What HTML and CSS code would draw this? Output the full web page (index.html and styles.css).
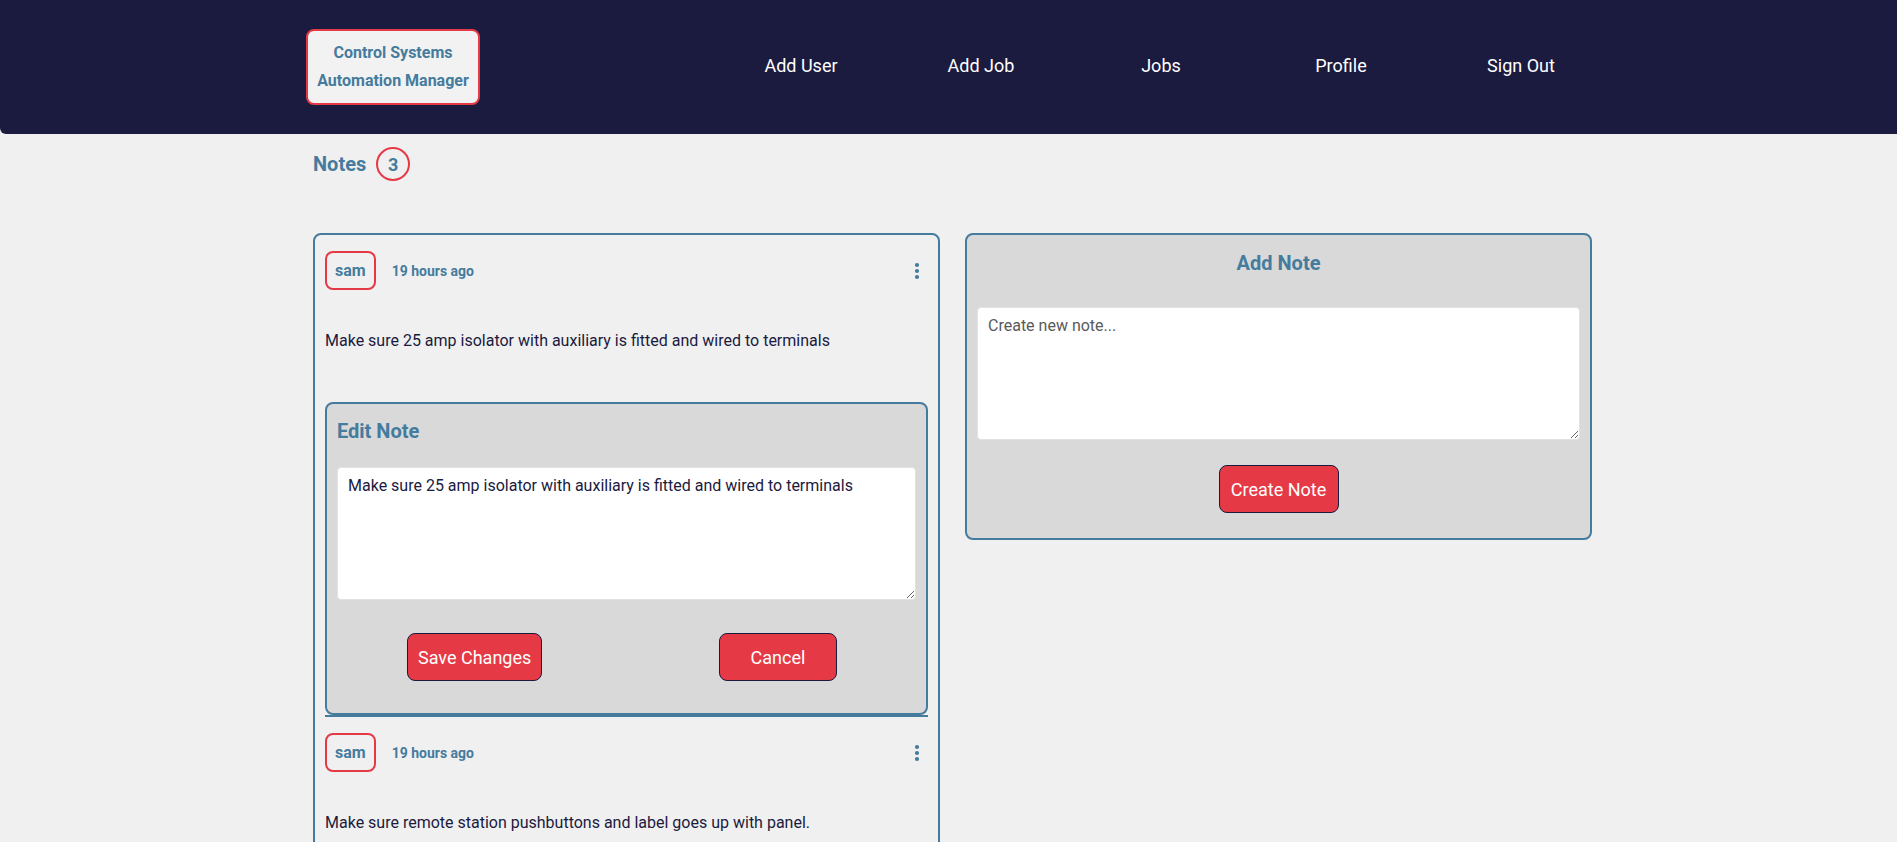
FILE: index.html
```html
<!DOCTYPE html>
<html lang="en">
<head>
<meta charset="utf-8">
<title>Control Systems Automation Manager</title>
<link rel="stylesheet" href="styles.css">
</head>
<body>
<header class="topbar">
  <div class="topbar-inner">
    <a class="brand" href="#">Control Systems<br>Automation Manager</a>
    <nav class="nav">
      <a href="#" class="nav-link">Add User</a>
      <a href="#" class="nav-link">Add Job</a>
      <a href="#" class="nav-link">Jobs</a>
      <a href="#" class="nav-link">Profile</a>
      <a href="#" class="nav-link">Sign Out</a>
    </nav>
  </div>
</header>

<main class="page">
  <div class="notes-heading">
    <h2 class="notes-title">Notes</h2>
    <span class="count-badge">3</span>
  </div>

  <div class="columns">
    <section class="notes-list">
      <article class="note">
        <div class="note-head">
          <span class="author">sam</span>
          <span class="time">19 hours ago</span>
          <button class="kebab" aria-label="Options">
            <svg width="20" height="20" viewBox="0 0 20 20"><circle cx="10" cy="4" r="2.1" fill="#457b9d"/><circle cx="10" cy="10" r="2.1" fill="#457b9d"/><circle cx="10" cy="16" r="2.1" fill="#457b9d"/></svg>
          </button>
        </div>
        <p class="note-text">Make sure 25 amp isolator with auxiliary is fitted and wired to terminals</p>
        <form class="edit-box">
          <h3 class="edit-title">Edit Note</h3>
          <textarea class="field edit-field">Make sure 25 amp isolator with auxiliary is fitted and wired to terminals</textarea>
          <div class="edit-actions">
            <button type="button" class="btn btn-save">Save Changes</button>
            <button type="button" class="btn btn-cancel">Cancel</button>
          </div>
        </form>
      </article>
      <article class="note">
        <div class="note-head">
          <span class="author">sam</span>
          <span class="time">19 hours ago</span>
          <button class="kebab" aria-label="Options">
            <svg width="20" height="20" viewBox="0 0 20 20"><circle cx="10" cy="4" r="2.1" fill="#457b9d"/><circle cx="10" cy="10" r="2.1" fill="#457b9d"/><circle cx="10" cy="16" r="2.1" fill="#457b9d"/></svg>
          </button>
        </div>
        <p class="note-text">Make sure remote station pushbuttons and label goes up with panel.</p>
      </article>
    </section>

    <section class="add-card">
      <h3 class="add-title">Add Note</h3>
      <textarea class="field add-field" placeholder="Create new note..."></textarea>
      <div class="add-actions">
        <button type="button" class="btn btn-create">Create Note</button>
      </div>
    </section>
  </div>
</main>
</body>
</html>
```

FILE: styles.css
```css
* { box-sizing: border-box; }

body {
  margin: 0;
  background: #f0f0f0;
  font-family: Roboto, "Liberation Sans", Arial, sans-serif;
  color: #1b1a3f;
}

.topbar {
  background: #1b1a3f;
  border-radius: 0 0 0 6px;
}

.topbar-inner {
  display: flex;
  align-items: center;
  height: 134px;
  padding-left: 306px;
}

.brand {
  display: block;
  width: 174px;
  height: 76px;
  padding: 8px 4px;
  background: #f2f2f2;
  border: 2px solid #e63946;
  border-radius: 8px;
  color: #457b9d;
  font-weight: 700;
  font-size: 16px;
  line-height: 28px;
  text-align: center;
  text-decoration: none;
}

.nav {
  display: flex;
  margin-left: 231px;
}

.nav-link {
  width: 180px;
  text-align: center;
  color: #ffffff;
  font-size: 18px;
  text-decoration: none;
  margin-top: -3px;
}

.page {
  padding: 0 305px 0 313px;
}

.notes-heading {
  display: flex;
  align-items: center;
  gap: 10px;
  margin-top: 13px;
  height: 34px;
}

.notes-title {
  margin: 0;
  color: #457b9d;
  font-size: 20px;
  font-weight: 700;
}

.count-badge {
  width: 34px;
  height: 34px;
  border: 2px solid #e63946;
  border-radius: 50%;
  display: flex;
  align-items: center;
  justify-content: center;
  color: #457b9d;
  font-weight: 700;
  font-size: 18px;
}

.columns {
  display: grid;
  grid-template-columns: 1fr 1fr;
  gap: 25px;
  margin-top: 52px;
  align-items: start;
}

.notes-list {
  border: 2px solid #457b9d;
  border-radius: 8px;
  padding: 0 10px;
  background: #f0f0f0;
  min-height: 700px;
}

.note {
  padding-top: 16px;
  border-bottom: 2px solid #457b9d;
}

.note-head {
  display: flex;
  align-items: center;
  height: 39px;
}

.author {
  height: 39px;
  padding: 0 8px;
  border: 2px solid #e63946;
  border-radius: 8px;
  display: flex;
  align-items: center;
  color: #457b9d;
  font-weight: 700;
  font-size: 16px;
}

.time {
  margin-left: 16px;
  color: #457b9d;
  font-weight: 700;
  font-size: 14px;
}

.kebab {
  margin-left: auto;
  margin-right: 1px;
  padding: 0;
  border: 0;
  background: none;
  width: 20px;
  height: 20px;
  display: flex;
}

.note-text {
  margin: 41px 0 52px;
  font-size: 16px;
  line-height: 19px;
}

.edit-box {
  background: #d9d9d9;
  border: 2px solid #457b9d;
  border-radius: 8px;
  padding: 16px 10px 32px;
}

.edit-title {
  margin: 0 0 25px 0;
  color: #457b9d;
  font-size: 20px;
  line-height: 22px;
  font-weight: 700;
}

.field {
  display: block;
  width: 100%;
  height: 133px;
  padding: 8px 10px;
  background: #ffffff;
  border: 1px solid #e2e2e2;
  border-radius: 4px;
  font-family: Roboto, "Liberation Sans", Arial, sans-serif;
  font-size: 16px;
  line-height: 19px;
  color: #1b1a3f;
}

.field::placeholder {
  color: #5a5a5a;
}

.edit-actions {
  display: flex;
  justify-content: space-between;
  margin-top: 33px;
  padding: 0 79px 0 70px;
}

.btn {
  height: 48px;
  background: #e63946;
  border: 1px solid #1b1a3f;
  border-radius: 8px;
  color: #ffffff;
  font-family: Roboto, "Liberation Sans", Arial, sans-serif;
  font-size: 18px;
  padding: 0 10px;
}

.btn-cancel {
  width: 118px;
}

.add-card {
  background: #d9d9d9;
  border: 2px solid #457b9d;
  border-radius: 8px;
  padding: 17px 10px 25px;
}

.add-title {
  margin: 0 0 33px;
  text-align: center;
  color: #457b9d;
  font-size: 20px;
  line-height: 22px;
  font-weight: 700;
}

.add-actions {
  display: flex;
  justify-content: center;
  margin-top: 25px;
}

.btn-create {
  width: 120px;
}
```
